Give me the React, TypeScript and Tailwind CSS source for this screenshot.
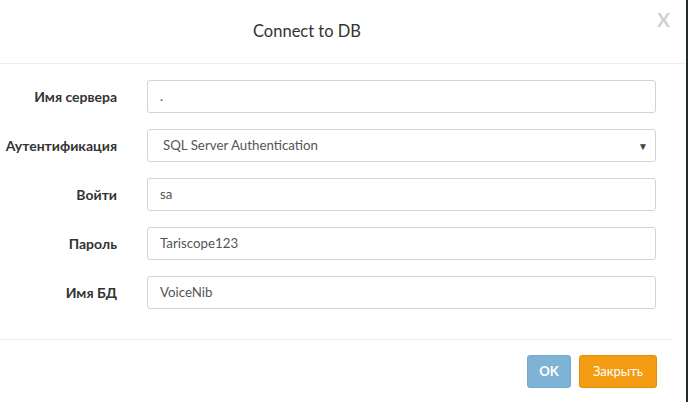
import React from 'react';

const font = { fontFamily: '"Lato", "Liberation Sans", sans-serif' };

const Row = ({ label, children }: { label: string; children: React.ReactNode }) => (
  <div className="flex items-center">
    <label className="w-[117px] shrink-0 text-right text-[14px] font-bold text-[#333]">{label}</label>
    <div className="ml-[30px] w-[509px]">{children}</div>
  </div>
);

const Field = ({ value }: { value: string }) => (
  <div className="h-[33px] flex items-center rounded-[3px] border border-[#d2d2dc] bg-white px-[12px] text-[13.3px] text-[#555]">
    {value}
  </div>
);

export default function App() {
  return (
    <div className="flex h-[402px] w-[688px] overflow-hidden bg-white" style={font}>
      <div className="flex w-[686px] flex-col">
        {/* Header */}
        <div className="relative flex h-[64px] items-center border-b border-[#eeeeee] pl-[253px]">
          <h4 className="text-[16.5px] text-[#333]">Connect to DB</h4>
          <span className="absolute right-[16px] top-[6px] text-[19px] font-bold text-[#d0d0d0]">X</span>
        </div>

        {/* Body */}
        <div className="flex flex-col gap-[16px] pt-[16px] pb-[30px]">
          <Row label="Имя сервера">
            <Field value="." />
          </Row>
          <Row label="Аутентификация">
            <div className="relative h-[33px] flex items-center rounded-[3px] border border-[#d2d2dc] bg-white pl-[15px] text-[13.3px] text-[#555]">
              SQL Server Authentication
              <span className="absolute right-[7px] top-[9px] text-[10px] text-[#444]">▼</span>
            </div>
          </Row>
          <Row label="Войти">
            <Field value="sa" />
          </Row>
          <Row label="Пароль">
            <Field value="Tariscope123" />
          </Row>
          <Row label="Имя БД">
            <Field value="VoiceNib" />
          </Row>
        </div>

        {/* Footer */}
        <div className="mr-[14px] border-t border-[#eeeeee]" />
        <div className="flex justify-end gap-[8px] pr-[29px] pt-[15px]">
          <button className="h-[33px] w-[44px] rounded-[3px] border border-[#73aacf] bg-[#7fb3d5] text-[13px] font-bold text-white">
            OK
          </button>
          <button className="h-[33px] w-[78px] rounded-[3px] border border-[#e08e0b] bg-[#f39c12] text-[13px] text-white">
            Закрыть
          </button>
        </div>
      </div>
      <div className="w-[2px] bg-[#222d32]" />
    </div>
  );
}
